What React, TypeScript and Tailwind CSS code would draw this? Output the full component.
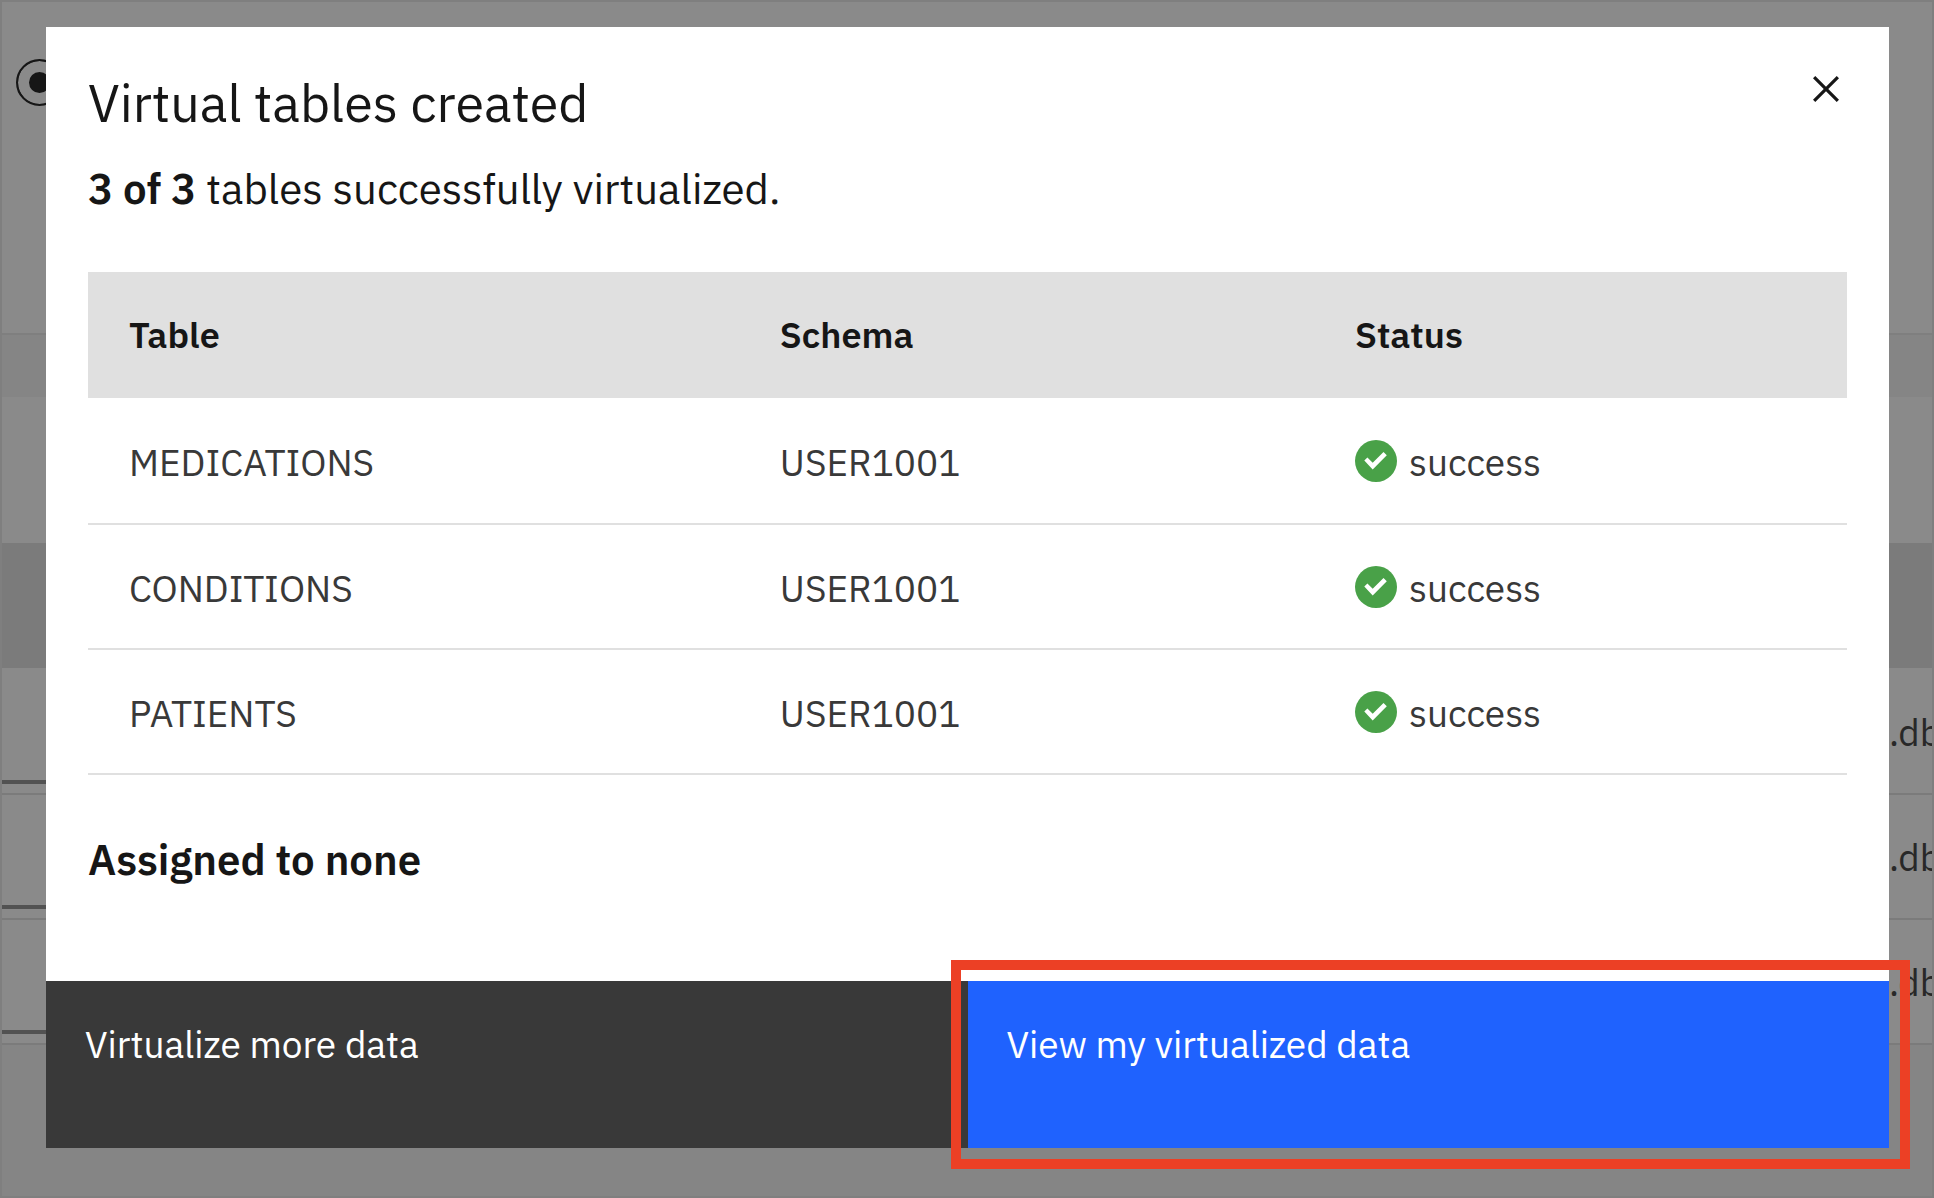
import React from "react";

const tables = [
  { name: "MEDICATIONS", schema: "USER1001", status: "success" },
  { name: "CONDITIONS", schema: "USER1001", status: "success" },
  { name: "PATIENTS", schema: "USER1001", status: "success" },
];

function CloseIcon() {
  return (
    <svg viewBox="0 0 32 32" className="size-[52px]" fill="#161616" aria-hidden="true">
      <path d="M24 9.4 22.6 8 16 14.6 9.4 8 8 9.4 14.6 16 8 22.6 9.4 24 16 17.4 22.6 24 24 22.6 17.4 16 24 9.4z" />
    </svg>
  );
}

function SuccessIcon() {
  return (
    <svg viewBox="0 0 42 42" className="size-[42px] shrink-0" aria-hidden="true">
      <circle cx="21" cy="21" r="21" fill="#49a148" />
      <path d="M9.3 20.5 12.4 17.4 17.7 22.7 28.5 12 31.8 15.2 17.7 29.5z" fill="#fff" />
    </svg>
  );
}

function PageRow() {
  return (
    <li className="flex h-[125px] items-center justify-between border-b-2 border-[#7b7b7b] bg-[#8a8a8a]">
      <div className="mb-[9px] h-1 w-40 self-end bg-[#525252]" />
      <span className="w-[43px] overflow-hidden text-[37px] leading-[48px] text-[#282828]">.db</span>
    </li>
  );
}

function Page() {
  return (
    <div className="flex min-h-screen flex-col border-2 border-[#7f7f7f] bg-[#858585]">
      <div className="h-[333px] border-b-2 border-[#7f7f7f] bg-[#8a8a8a] pt-[57px] pl-[14px]">
        <input
          type="radio"
          defaultChecked
          aria-label="Tables"
          className="block size-[47px] appearance-none rounded-full border-2 border-[#161616] bg-[#161616] shadow-[inset_0_0_0_11px_#8a8a8a]"
        />
      </div>
      <div className="h-[62px] bg-[#858585]" />
      <div className="h-[146px] bg-[#8a8a8a]" />
      <div className="h-[125px] bg-[#7b7b7b]" />
      <ul className="bg-[#8a8a8a] pt-[2px]">
        <PageRow />
        <PageRow />
        <PageRow />
      </ul>
    </div>
  );
}

export default function App() {
  return (
    <div className="relative overflow-hidden font-['IBM_Plex_Sans',Roboto,sans-serif] text-[#161616]">
      <Page />
      <div className="absolute inset-0 pt-[27px] pr-[45px] pl-[46px]">
        <section role="dialog" aria-labelledby="dialog-title" className="bg-white">
          <div className="px-[42px] pt-[44px] pb-[94px]">
            <header className="flex items-start justify-between">
              <h1 id="dialog-title" className="text-[52px] leading-[64px]">
                Virtual tables created
              </h1>
              <button type="button" aria-label="Close" className="-mt-2 -mr-[5px]">
                <CloseIcon />
              </button>
            </header>
            <p className="mt-[27px] text-[42px] leading-[54px]">
              <strong className="font-semibold">3 of 3</strong> tables successfully virtualized.
            </p>
            <table className="mt-14 w-full table-fixed border-separate border-spacing-0 text-left leading-[48px]">
              <thead className="text-[36px]">
                <tr className="h-[126px] bg-[#e0e0e0]">
                  <th className="w-[37%] pl-[41px] font-semibold">Table</th>
                  <th className="w-[32.7%] pl-[41px] font-semibold">Schema</th>
                  <th className="pl-[41px] font-semibold">Status</th>
                </tr>
              </thead>
              <tbody className="text-[37px] text-[#393939]">
                {tables.map((t) => (
                  <tr key={t.name} className="h-[125px] first:h-[127px]">
                    <td className="border-b-2 border-[#e0e0e0] pt-[3px] pl-[41px]">{t.name}</td>
                    <td className="border-b-2 border-[#e0e0e0] pt-[3px] pl-[41px]">{t.schema}</td>
                    <td className="border-b-2 border-[#e0e0e0] pl-[41px]">
                      <div className="flex items-center gap-3">
                        <SuccessIcon />
                        <span className="pt-[3px]">{t.status}</span>
                      </div>
                    </td>
                  </tr>
                ))}
              </tbody>
            </table>
            <h2 className="mt-[58px] text-[42px] leading-[54px] font-semibold">Assigned to none</h2>
          </div>
          <footer className="grid grid-cols-2 text-[37px] leading-[48px] text-white">
            <button type="button" className="flex h-[167px] items-start bg-[#393939] pt-[39px] pl-[39px] text-left">
              Virtualize more data
            </button>
            <div className="relative">
              <button type="button" className="flex h-[167px] w-full items-start bg-[#1f62fe] pt-[39px] pl-[39px] text-left">
                View my virtualized data
              </button>
              <div className="pointer-events-none absolute -top-[21px] -right-[21px] -bottom-[21px] -left-[17px] border-[10px] border-[#ec4025]" />
            </div>
          </footer>
        </section>
      </div>
    </div>
  );
}
